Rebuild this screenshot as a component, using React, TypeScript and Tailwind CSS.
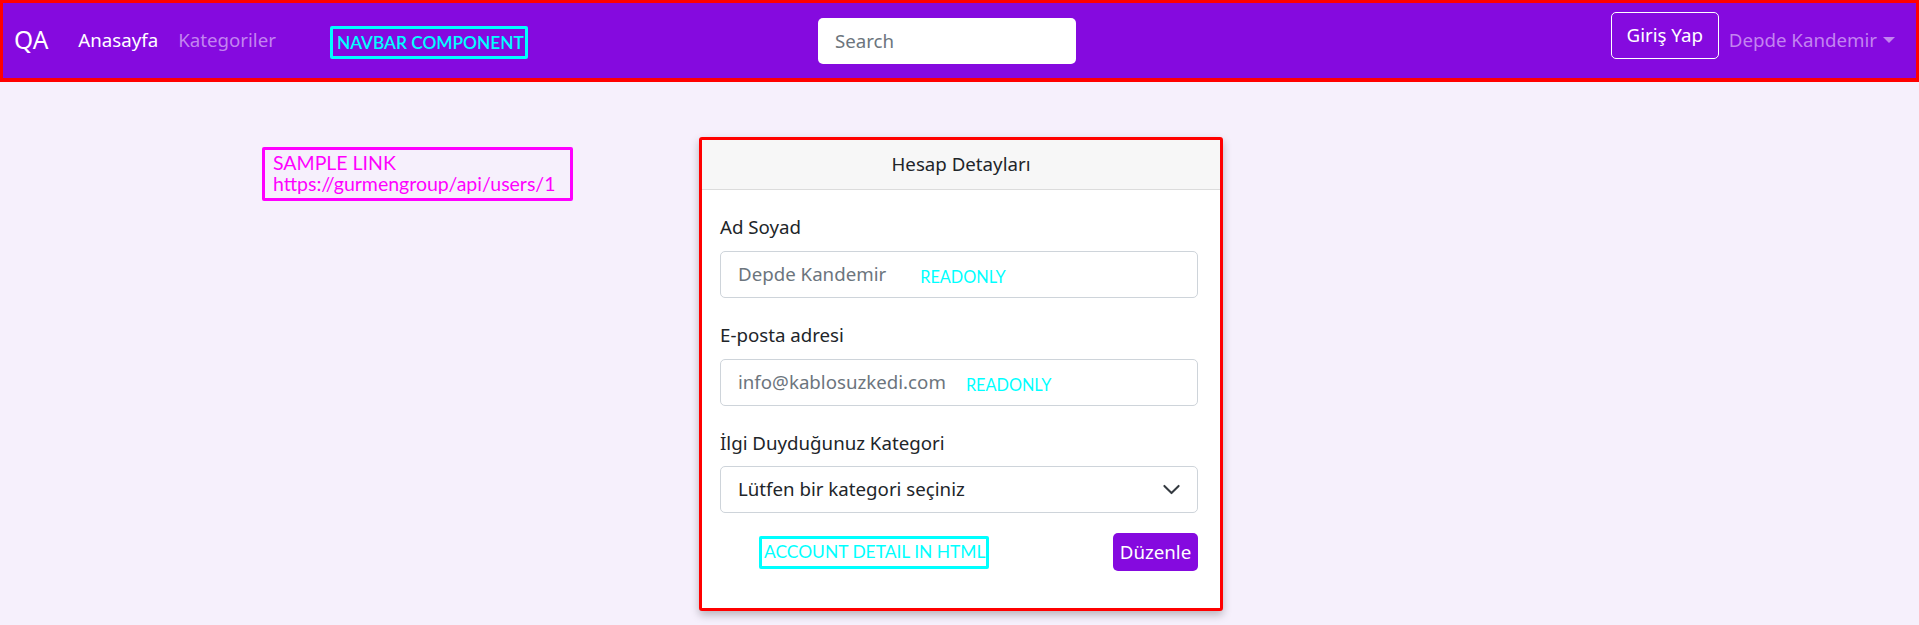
const body = "font-['Noto_Sans',sans-serif]";
const note = "font-['Lato',sans-serif] whitespace-nowrap";

function Navbar() {
  return (
    <nav className="h-[82px] bg-[#850adf] border-[3px] border-b-4 border-[#ff0000] flex items-center pl-[11px] pr-[21px]">
      <a className="text-[24.5px] text-white leading-none mr-[30px]">QA</a>
      <a className="text-[18.7px] text-white mr-[20px]">Anasayfa</a>
      <a className="text-[18.7px] text-[#c384f0]">Kategoriler</a>
      <div className="ml-[54px] mt-[4px] h-[33px] w-[198px] border-[3px] border-[#00ffff] rounded-[2px] flex items-center pl-[4px]">
        <span className={`${note} text-[17.3px] font-semibold text-[#00ffff] leading-none`}>NAVBAR COMPONENT</span>
      </div>
      <div className="ml-[290px] mt-[1px] h-[46px] w-[258px] bg-white rounded-[5px] flex items-center px-[17px]">
        <span className="text-[18.7px] text-[#6c757d]">Search</span>
      </div>
      <div className="ml-auto flex items-center">
        <button className="h-[47px] w-[108px] mb-[10px] border border-white rounded-[5px] text-[18.7px] text-white">
          Giriş Yap
        </button>
        <a className="ml-[10px] text-[18.7px] text-[#c384f0] flex items-center">
          Depde Kandemir
          <span className="ml-[6px] w-0 h-0 border-l-[6px] border-r-[6px] border-t-[6px] border-l-transparent border-r-transparent border-t-[#c384f0]" />
        </a>
      </div>
    </nav>
  );
}

function Field({ label, value, tag, tagGap }: { label: string; value: string; tag: string; tagGap: string }) {
  return (
    <div className="flex flex-col">
      <label className="text-[18.7px] leading-[30px] text-[#212529]">{label}</label>
      <div className="mt-[9px] h-[47px] border border-[#ced4da] rounded-[5px] flex items-center px-[17px]">
        <span className="text-[18.7px] text-[#6c757d]">{value}</span>
        <span className={`${note} ${tagGap} mt-[6px] text-[16.3px] text-[#00ffff] leading-none`}>{tag}</span>
      </div>
    </div>
  );
}

export default function App() {
  return (
    <div className={`${body} min-h-[625px] bg-[#f6f0fc]`}>
      <Navbar />
      <div className="flex pt-[55px]">
        <div className="ml-[262px] mt-[10px] h-[54px] w-[311px] border-[3px] border-[#ff00ff] rounded-[2px] pl-[8px] pt-[2px]">
          <div className="h-[43px] overflow-hidden">
            <div className={`${note} text-[19.5px] leading-[21px] text-[#ff00ff]`}>SAMPLE LINK</div>
            <div className={`${note} text-[19.5px] leading-[21px] text-[#ff00ff]`}>https://gurmengroup/api/users/1</div>
          </div>
        </div>
        <div className="ml-[126px] w-[524px] h-[474px] bg-white border-[3px] border-[#ff0000] rounded-[3px] shadow-[0_4px_8px_rgba(0,0,0,0.25)] flex flex-col">
          <div className="h-[50px] bg-[#f7f7f7] border-b border-[#dcdcdc] flex items-center justify-center">
            <span className="text-[18.7px] text-[#212529]">Hesap Detayları</span>
          </div>
          <div className="pl-[18px] pr-[22px] pt-[22px] flex flex-col gap-[22px]">
            <Field label="Ad Soyad" value="Depde Kandemir" tag="READONLY" tagGap="ml-[34px]" />
            <Field label="E-posta adresi" value="info@kablosuzkedi.com" tag="READONLY" tagGap="ml-[20px]" />
            <div className="flex flex-col">
              <label className="text-[18.7px] leading-[30px] text-[#212529]">İlgi Duyduğunuz Kategori</label>
              <div className="mt-[8px] h-[47px] border border-[#ced4da] rounded-[5px] flex items-center justify-between pl-[17px] pr-[16px]">
                <span className="text-[18.7px] text-[#212529]">Lütfen bir kategori seçiniz</span>
                <svg width="19" height="19" viewBox="0 0 16 16" fill="none">
                  <path d="m2 5 6 6 6-6" stroke="#343a40" strokeWidth="1.7" strokeLinecap="round" strokeLinejoin="round" />
                </svg>
              </div>
            </div>
            <div className="-mt-[2px] flex items-center justify-between">
              <div className="ml-[39px] h-[33px] w-[230px] border-[3px] border-[#00ffff] rounded-[2px] flex items-center pl-[2px]">
                <span className={`${note} text-[17.4px] leading-none text-[#00ffff]`}>ACCOUNT DETAIL IN HTML</span>
              </div>
              <button className="h-[38px] w-[85px] bg-[#850adf] rounded-[5px] text-[18.7px] text-white">Düzenle</button>
            </div>
          </div>
        </div>
      </div>
    </div>
  );
}
